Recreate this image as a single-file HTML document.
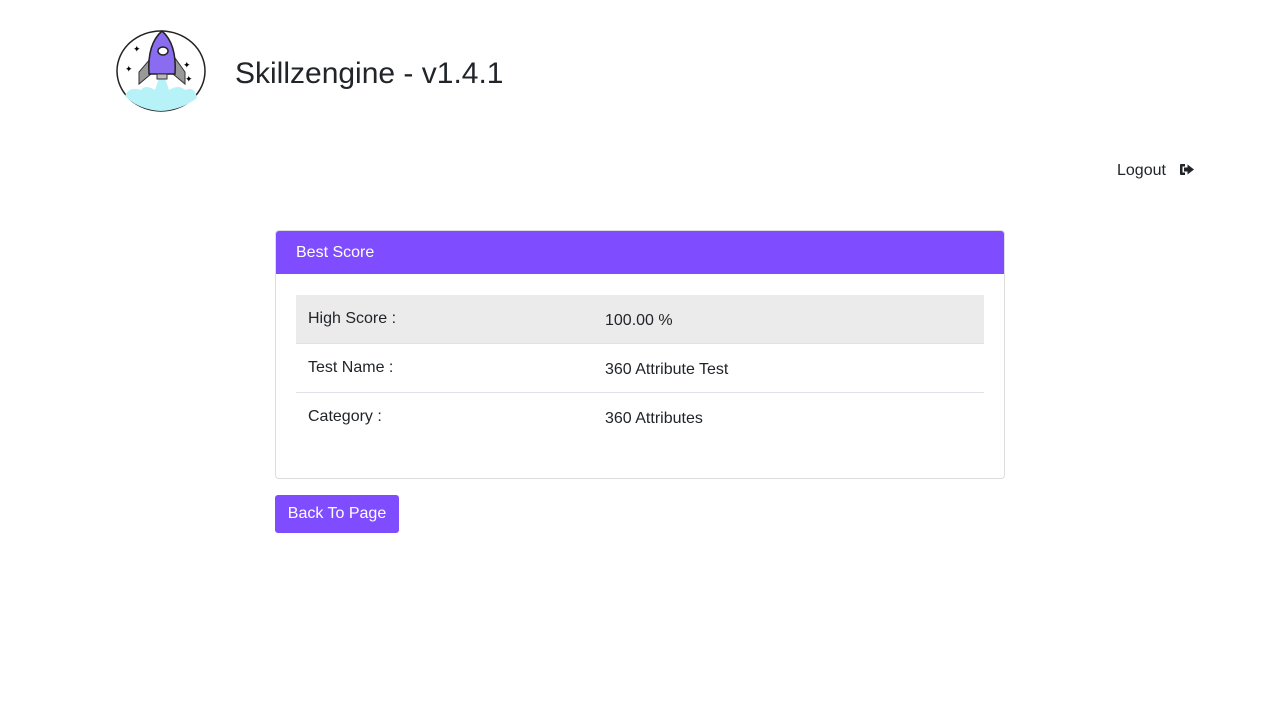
<!DOCTYPE html>
<html><head><style>
body{margin:0;background:#fff;font-family:"Liberation Sans",sans-serif;color:#212529;}
.title{position:absolute;left:235px;top:57px;font-size:30px;}
.logout{position:absolute;left:1117px;top:162px;font-size:16px;}
.card{position:absolute;left:275px;top:230px;width:728px;height:247px;border:1px solid #dcdcdc;border-radius:4px;overflow:hidden;}
.hd{background:#7f4dff;color:#fff;height:43px;line-height:43px;padding-left:20px;font-size:16px;}
table{position:absolute;left:20px;top:64px;width:688px;border-collapse:collapse;font-size:16px;}
td{height:48px;border-bottom:1px solid #dee2e6;padding:0 12px;vertical-align:middle;line-height:18px;}
td.l{width:273px}
td span{position:relative;top:2px}
td.l span{top:0px}
tr.g td{background:#ebebeb;}
tr:last-child td{border-bottom:none}
.btn{position:absolute;left:275px;top:495px;width:124px;height:38px;background:#7f4dff;color:#fff;border-radius:3px;font-size:16px;line-height:38px;text-align:center;}
</style></head><body>
<svg style="position:absolute;left:115px;top:28px" width="92" height="86" viewBox="0 0 92 86">
<ellipse cx="46" cy="43" rx="44" ry="40" fill="#fff" stroke="#222" stroke-width="1.5"/>
<path d="M10 68 Q14 58 26 62 Q30 56 40 62 L44 50 L50 50 L54 62 Q64 56 70 62 Q80 58 82 70 Q66 82 46 83 Q24 82 10 68Z" fill="#b6f2f7"/>
<path d="M36 30 L24 44 L24 56 L36 46Z M60 30 L70 44 L70 56 L58 46Z" fill="#999" stroke="#333"/>
<path d="M47 3 Q62 16 60 46 L34 46 Q32 16 47 3Z" fill="#8a6cf0" stroke="#222" stroke-width="1.5"/>
<ellipse cx="48" cy="23" rx="5" ry="4" fill="#fff" stroke="#222" stroke-width="1.5"/>
<rect x="42" y="46" width="10" height="5" fill="#bbb" stroke="#333"/>
<text x="10" y="44" font-size="9">✦</text><text x="18" y="24" font-size="9">✦</text><text x="68" y="40" font-size="9">✦</text><text x="70" y="54" font-size="9">✦</text>
</svg>
<div class="title">Skillzengine - v1.4.1</div>
<div class="logout">Logout &nbsp;&nbsp;<svg width="16" height="13" viewBox="0 0 16 13" style="vertical-align:-1px"><path d="M1 2 Q1 1 2 1 H6 V3.5 H3.5 V9.5 H6 V12 H2 Q1 12 1 11Z M5 4.5 H8.5 V1.5 L15 6.5 L8.5 11.5 V8.5 H5Z" fill="#212529"/></svg></div>
<div class="card"><div class="hd">Best Score</div>
<table>
<tr class="g"><td class="l"><span>High Score :</span></td><td><span>100.00 %</span></td></tr>
<tr><td class="l"><span>Test Name :</span></td><td><span>360 Attribute Test</span></td></tr>
<tr><td class="l"><span>Category :</span></td><td><span>360 Attributes</span></td></tr>
</table></div>
<div class="btn">Back To Page</div>
</body></html>
